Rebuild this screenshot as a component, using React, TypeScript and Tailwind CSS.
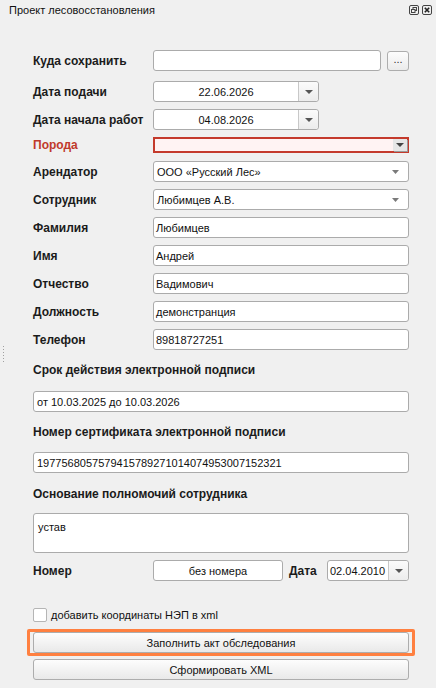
import React from 'react';

const font = { fontFamily: '"Liberation Sans", Arial, sans-serif' };

function Arrow({ color = '#555', w = 8, h = 4 }: { color?: string; w?: number; h?: number }) {
  return (
    <svg width={w} height={h} viewBox={`0 0 ${w} ${h}`}>
      <polygon points={`0,0 ${w},0 ${w / 2},${h}`} fill={color} />
    </svg>
  );
}

function Label({ children, red = false }: { children: React.ReactNode; red?: boolean }) {
  return (
    <div className={`w-[120px] shrink-0 text-[12px] font-bold ${red ? 'text-[#c0392b]' : 'text-[#1b1b1b]'}`}>
      {children}
    </div>
  );
}

function TextBox({ value = '', className = '' }: { value?: string; className?: string }) {
  return (
    <div
      className={`h-[21px] flex items-center bg-white border border-[#ababab] rounded-[3px] px-[2px] text-[11px] text-[#111] ${className}`}
    >
      {value}
    </div>
  );
}

function Combo({ value }: { value: string }) {
  return (
    <div className="flex-1 h-[21px] flex items-center justify-between bg-white border border-[#ababab] rounded-[3px] pl-[3px] pr-[9px] text-[11px] text-[#111]">
      <span>{value}</span>
      <Arrow color="#7a7a7a" w={7} h={4} />
    </div>
  );
}

function DateBox({ value, width, center = true }: { value: string; width: string; center?: boolean }) {
  return (
    <div className={`${width} h-[21px] flex bg-white border border-[#ababab] rounded-[3px] text-[11px] text-[#111]`}>
      <div className={`flex-1 flex items-center ${center ? 'justify-center' : 'pl-[2px]'}`}>{value}</div>
      <div className="w-[20px] flex items-center justify-center border-l border-[#c8c8c8] bg-gradient-to-b from-[#fbfbfb] to-[#ececec] rounded-r-[3px]">
        <Arrow />
      </div>
    </div>
  );
}

function Button({ children }: { children: React.ReactNode }) {
  return (
    <div className="h-[21px] flex items-center justify-center border border-[#adadad] rounded-[3px] bg-gradient-to-b from-[#fdfdfd] to-[#e9e9e9] text-[11px] text-[#111]">
      {children}
    </div>
  );
}

export default function App() {
  return (
    <div className="w-[436px] h-[688px] bg-[#f0f0f0] relative overflow-hidden leading-[16px]" style={font}>
      {/* title bar */}
      <div className="h-[20px] flex items-center justify-between pl-[9px] pr-[4px]">
        <span className="text-[11px] text-[#111]">Проект лесовосстановления</span>
        <div className="flex gap-[3px]">
          <svg width="10" height="10" viewBox="0 0 10 10">
            <rect x="0.5" y="0.5" width="9" height="9" rx="1.5" fill="none" stroke="#444" />
            <rect x="4" y="2.5" width="3.5" height="3" fill="none" stroke="#444" />
            <rect x="2.5" y="4.5" width="3.5" height="3" fill="#f0f0f0" stroke="#444" />
          </svg>
          <svg width="10" height="10" viewBox="0 0 10 10">
            <rect x="0.5" y="0.5" width="9" height="9" rx="1.5" fill="none" stroke="#444" />
            <path d="M2.8 2.8 L7.2 7.2 M7.2 2.8 L2.8 7.2" stroke="#222" strokeWidth="1.6" />
          </svg>
        </div>
      </div>

      {/* splitter handle */}
      <div className="absolute left-[3px] top-[346px] flex flex-col gap-[2px]">
        {[0, 1, 2, 3, 4, 5].map((i) => (
          <div key={i} className="w-[1px] h-[1px] bg-[#a0a0a0]" />
        ))}
      </div>

      <div className="pl-[33px] pr-[27px] flex flex-col">
        <div className="mt-[30px] flex items-center">
          <Label>Куда сохранить</Label>
          <TextBox className="flex-1" />
          <div className="ml-[6px] w-[22px] h-[20px] flex items-center justify-center border border-[#adadad] rounded-[3px] bg-gradient-to-b from-[#fdfdfd] to-[#ebebeb] text-[11px] text-[#333] leading-none pb-[3px]">
            ...
          </div>
        </div>

        <div className="mt-[10px] flex items-center">
          <Label>Дата подачи</Label>
          <DateBox value="22.06.2026" width="w-[166px]" />
        </div>

        <div className="mt-[7px] flex items-center">
          <Label>Дата начала работ</Label>
          <DateBox value="04.08.2026" width="w-[166px]" />
        </div>

        <div className="mt-[7px] flex items-center">
          <Label red>Порода</Label>
          <div className="flex-1 h-[16px] flex justify-end bg-[#fff3f3] border-2 border-[#c43a2c]">
            <div className="w-[14px] flex items-center justify-center bg-[#e6e6e6] shadow-[1px_1px_0_#9a9a9a]">
              <Arrow color="#444" />
            </div>
          </div>
        </div>

        <div className="mt-[8px] flex items-center">
          <Label>Арендатор</Label>
          <Combo value="ООО «Русский Лес»" />
        </div>

        <div className="mt-[7px] flex items-center">
          <Label>Сотрудник</Label>
          <Combo value="Любимцев А.В." />
        </div>

        {[
          ['Фамилия', 'Любимцев'],
          ['Имя', 'Андрей'],
          ['Отчество', 'Вадимович'],
          ['Должность', 'демонстранция'],
          ['Телефон', '89818727251'],
        ].map(([l, v]) => (
          <div key={l} className="mt-[7px] flex items-center">
            <Label>{l}</Label>
            <TextBox value={v} className="flex-1" />
          </div>
        ))}

        <div className="mt-[12px] text-[12px] font-bold text-[#1b1b1b]">Срок действия электронной подписи</div>
        <TextBox value="от 10.03.2025 до 10.03.2026" className="mt-[13px] pl-[3px]" />

        <div className="mt-[12px] text-[12px] font-bold text-[#1b1b1b]">Номер сертификата электронной подписи</div>
        <TextBox value="1977568057579415789271014074953007152321" className="mt-[12px] pl-[3px]" />

        <div className="mt-[13px] text-[12px] font-bold text-[#1b1b1b]">Основание полномочий сотрудника</div>
        <div className="mt-[11px] h-[40px] bg-white border border-[#ababab] rounded-[3px] px-[4px] pt-[5px] text-[11px] text-[#111]">
          устав
        </div>

        <div className="mt-[7px] flex items-center">
          <Label>Номер</Label>
          <TextBox value="без номера" className="w-[130px] shrink-0 justify-center" />
          <div className="ml-[6px] w-[38px] shrink-0 text-[12px] font-bold text-[#1b1b1b]">Дата</div>
          <DateBox value="02.04.2010" width="flex-1" center={false} />
        </div>

        <div className="mt-[26px] flex items-center">
          <div className="w-[14px] h-[14px] bg-white border border-[#b5b5b5] rounded-[2px]" />
          <span className="ml-[4px] text-[11px] text-[#111]">добавить координаты НЭП в xml</span>
        </div>

        <div className="mt-[6px] -mx-[6px] border-[3px] border-[#ff8040] rounded-[2px] px-[3px]">
          <Button>Заполнить акт обследования</Button>
        </div>

        <div className="mt-[3px]">
          <Button>Сформировать XML</Button>
        </div>
      </div>
    </div>
  );
}
